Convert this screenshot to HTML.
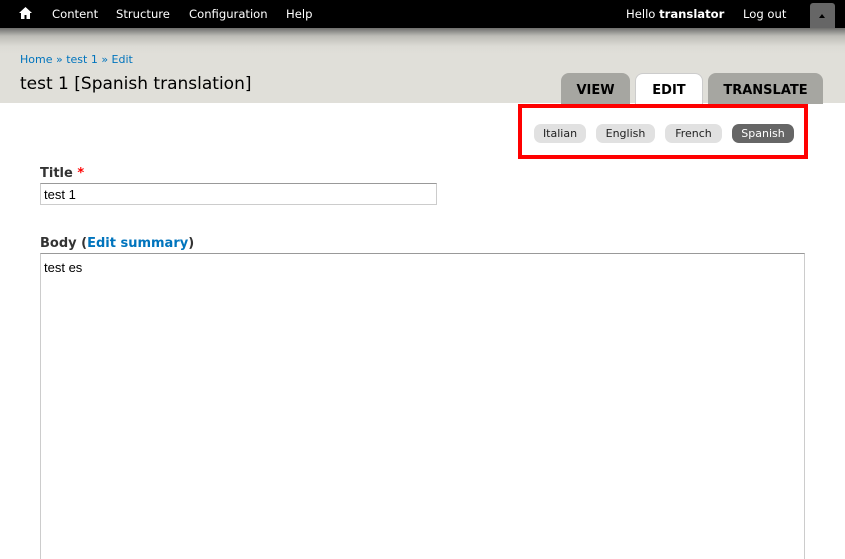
<!DOCTYPE html>
<html><head><style>
*{margin:0;padding:0;box-sizing:border-box}
html,body{width:845px;height:559px;overflow:hidden}
body{background:#fff;font-family:"DejaVu Sans","Liberation Sans",sans-serif;position:relative}
.top{position:absolute;left:0;top:0;width:845px;height:28px;background:#000;color:#fff;font-size:11.6px}
.top span{position:absolute;top:7px}
.hdr{position:absolute;left:0;top:28px;width:845px;height:75px;background:linear-gradient(#6e6e6c 0px,#bdbcb7 8px,#dcdbd5 18px,#e0dfd9 26px)}
.a{color:#0074bd}
.tab{position:absolute;top:73px;height:31px;border-radius:8px 8px 0 0;background:#a6a6a1;font-weight:bold;font-size:13px;text-align:center;line-height:36px;color:#000}
.pill{position:absolute;top:124px;height:19px;border-radius:7px;background:#e1e1e1;font-size:11px;text-align:center;line-height:20px;color:#222}
</style></head><body>
<div class="top">
<svg style="position:absolute;left:19px;top:7px" width="13" height="12" viewBox="0 0 13 12"><path d="M6.5 0L0 6h2v6h3.5V8h2v4H11V6h2z" fill="#fff"/></svg>
<span style="left:52px">Content</span><span style="left:116px">Structure</span><span style="left:189px">Configuration</span><span style="left:286px">Help</span>
<span style="left:626px">Hello <b>translator</b></span><span style="left:743px">Log out</span>
<div style="position:absolute;left:810px;top:3px;width:25px;height:25px;background:#666;border-radius:3px 3px 0 0"><div style="position:absolute;left:9px;top:11px;border-left:3.5px solid transparent;border-right:3.5px solid transparent;border-bottom:4px solid #000"></div></div>
</div>
<div class="hdr">
<div style="position:absolute;left:20px;top:25px;font-size:11px" class="a">Home » test 1 » Edit</div>
<div style="position:absolute;left:20px;top:46px;font-size:17px;color:#000">test 1 [Spanish translation]</div>
</div>
<div class="tab" style="left:561px;width:69px">VIEW</div>
<div class="tab" style="left:635px;width:68px;background:#fff;border:1px solid #ccc;border-bottom:none;height:31px;line-height:34px">EDIT</div>
<div class="tab" style="left:708px;width:115px">TRANSLATE</div>
<div style="position:absolute;left:518px;top:104px;width:290px;height:55px;border:4px solid #f00"></div>
<div class="pill" style="left:534px;width:52px">Italian</div>
<div class="pill" style="left:596px;width:59px">English</div>
<div class="pill" style="left:665px;width:57px">French</div>
<div class="pill" style="left:732px;width:62px;background:#666;color:#fff">Spanish</div>
<div style="position:absolute;left:40px;top:166px;font-size:13px;font-weight:bold;color:#333">Title <span style="color:#f00">*</span></div>
<div style="position:absolute;left:40px;top:183px;width:397px;height:22px;border:1px solid #ccc;border-top-color:#999;font-family:'Liberation Sans',sans-serif;font-size:13px;padding:3px 3px;color:#000">test 1</div>
<div style="position:absolute;left:40px;top:236px;font-size:13px;font-weight:bold;color:#333">Body (<span class="a">Edit summary</span>)</div>
<div style="position:absolute;left:40px;top:253px;width:765px;height:320px;border:1px solid #ccc;border-top-color:#999;font-family:'Liberation Sans',sans-serif;font-size:13px;padding:6px 3px;color:#000">test es</div>
</body></html>
